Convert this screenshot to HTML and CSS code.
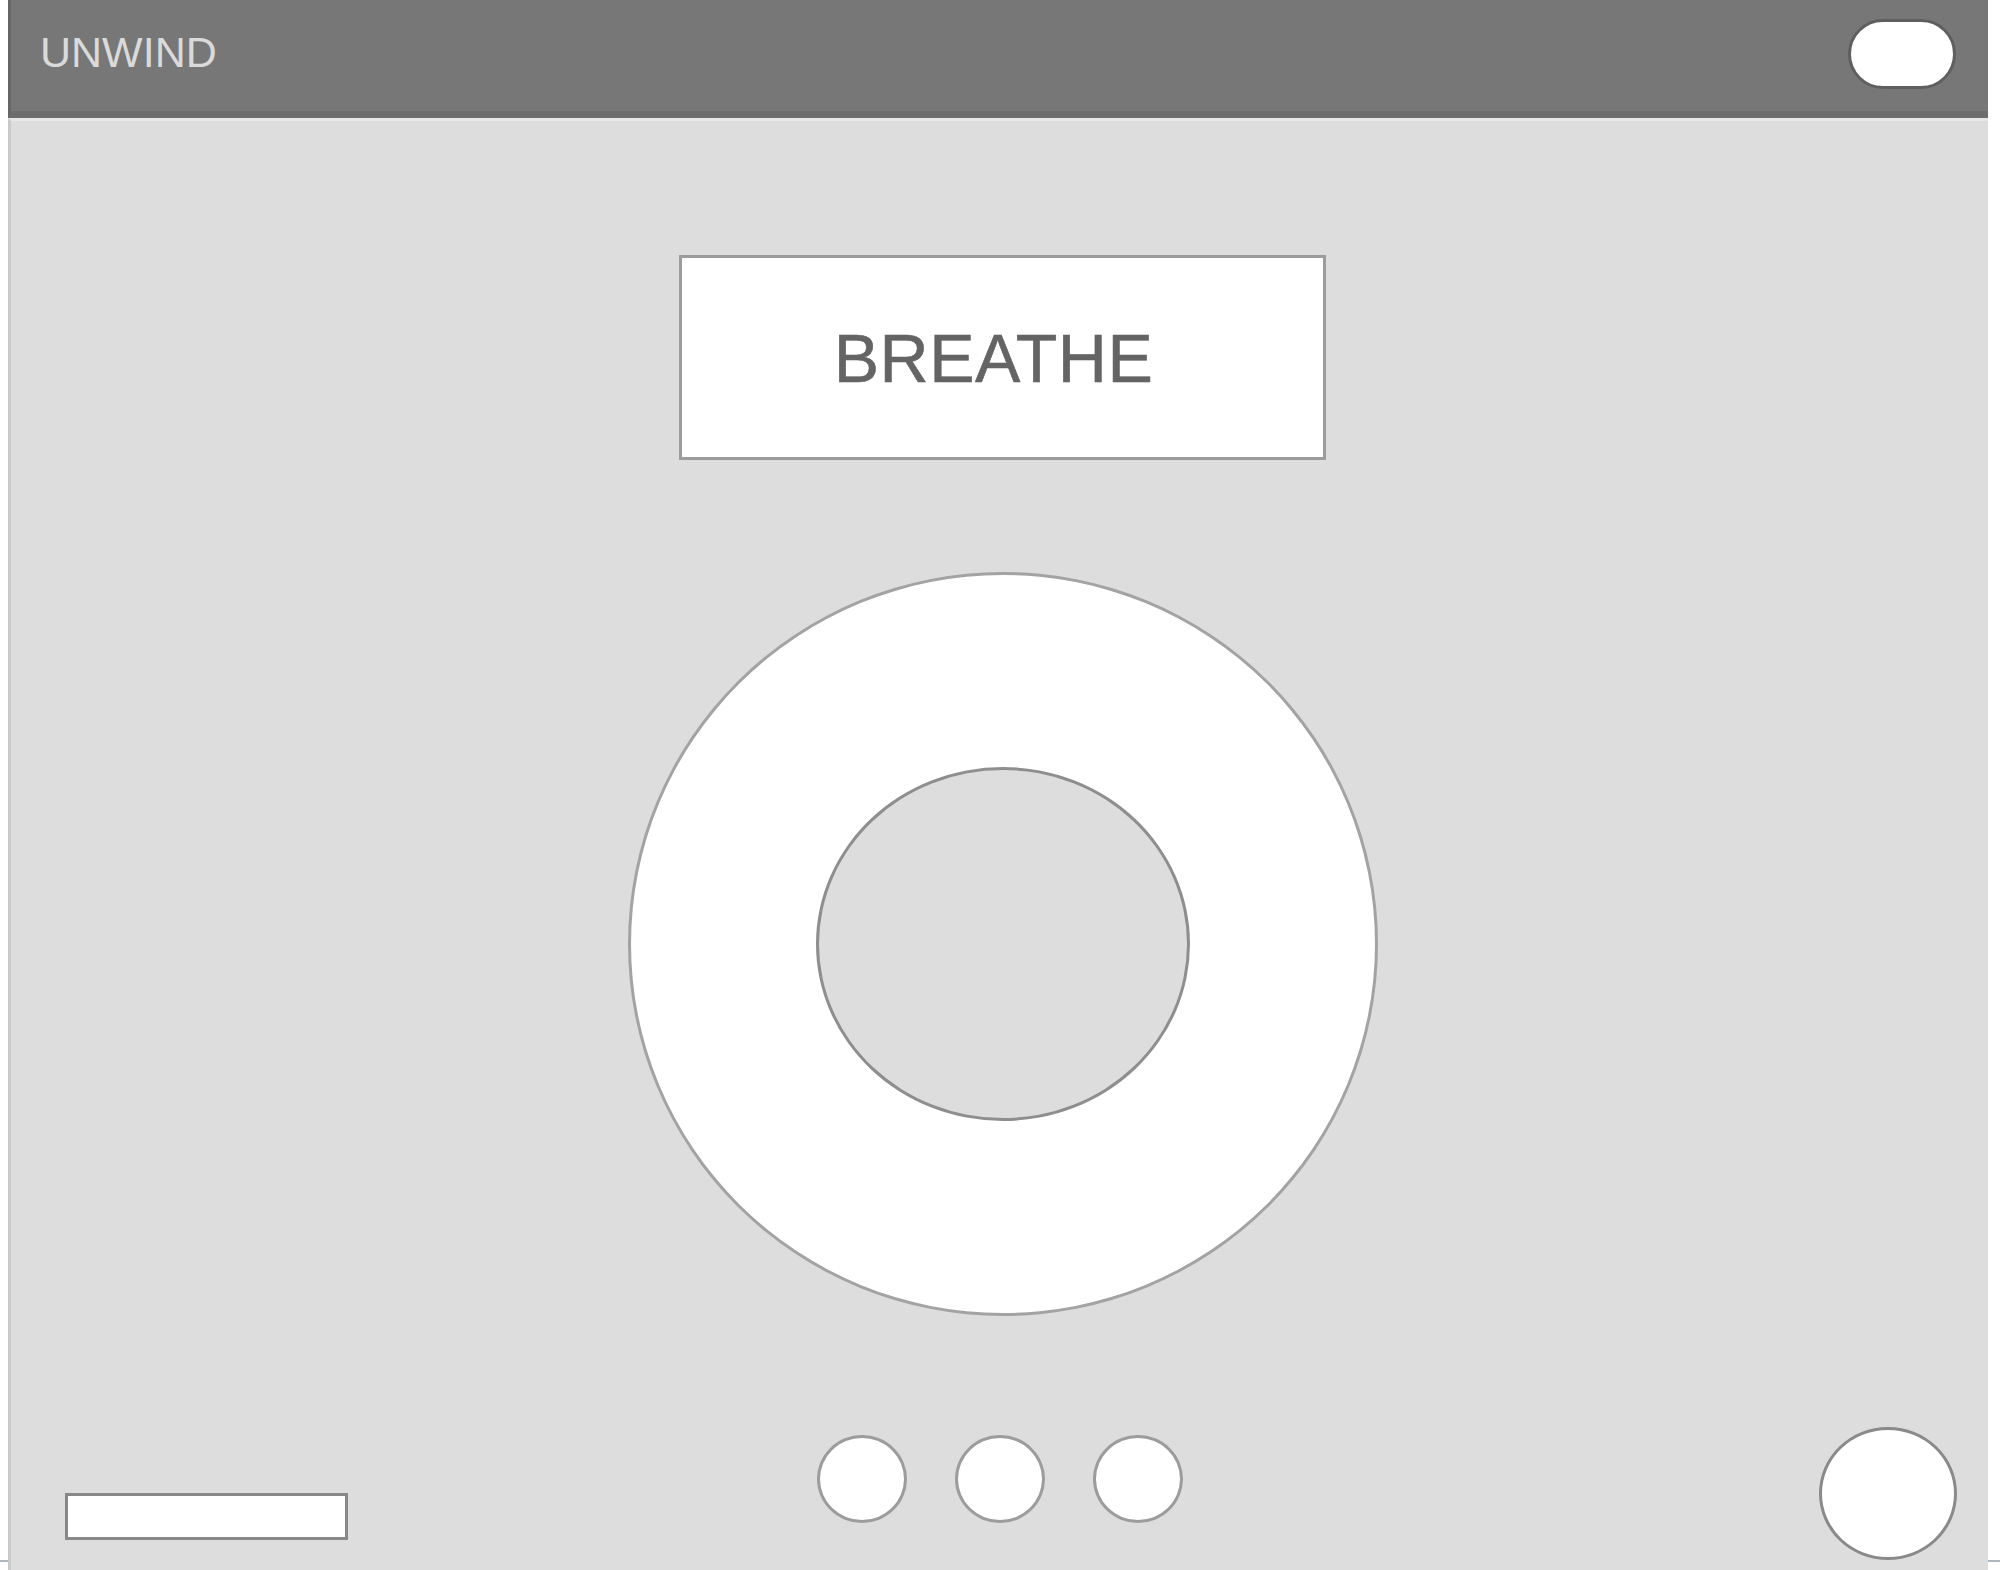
FILE: index.html
```html
<!DOCTYPE html>
<html lang="en">
<head>
<meta charset="utf-8">
<title>Unwind</title>
<link rel="stylesheet" href="styles.css">
</head>
<body>
<div class="frame">
  <header class="topbar">
    <div class="brand">UNWIND</div>
    <div class="toggle"></div>
  </header>
  <main class="stage">
    <div class="title-box">BREATHE</div>
    <div class="ring">
      <div class="ring-core"></div>
    </div>
    <div class="footer">
      <div class="bar"></div>
      <div class="dots">
        <span class="dot"></span>
        <span class="dot"></span>
        <span class="dot"></span>
      </div>
      <div class="round-btn"></div>
    </div>
  </main>
</div>
</body>
</html>
```
FILE: styles.css
```css
* { box-sizing: border-box; }
html, body { margin: 0; padding: 0; }
body {
  width: 2000px;
  height: 1570px;
  overflow: hidden;
  background: #ffffff linear-gradient(to bottom, transparent 1560px, #aeb5bd 1560px, #aeb5bd 1562px, transparent 1562px);
  font-family: "Liberation Sans", Arial, sans-serif;
}
.frame {
  margin-left: 8px;
  width: 1980px;
  height: 1570px;
  display: flex;
  flex-direction: column;
}
.topbar {
  height: 118px;
  flex: none;
  background: #777777;
  border-left: 3px solid #666666;
  border-bottom: 7px solid #6c6c6c;
  display: flex;
  align-items: center;
  justify-content: space-between;
  padding: 0 32px 0 29px;
}
.brand {
  color: #dadada;
  font-size: 43px;
  line-height: 1;
  margin-top: -6px;
}
.toggle {
  width: 108px;
  height: 70px;
  border-radius: 35px;
  background: #ffffff;
  border: 3px solid #5f5f5f;
  margin-top: -4px;
}
.stage {
  flex: 1;
  background: #dddddd;
  border-left: 3px solid #c9c9c9;
  border-top: 3px solid #e6e6e6;
  display: flex;
  flex-direction: column;
  align-items: center;
  padding-top: 134px;
}
.title-box {
  width: 647px;
  height: 205px;
  background: #ffffff;
  border: 3px solid #9c9c9c;
  display: flex;
  align-items: center;
  justify-content: center;
  padding-right: 18px;
  color: #646464;
  font-size: 68px;
  letter-spacing: 0.5px;
  margin-left: 6px;
  -webkit-text-stroke: 0.6px #646464;
}
.ring {
  margin-top: 112px;
  margin-left: 6px;
  width: 750px;
  height: 744px;
  border-radius: 50%;
  background: #ffffff;
  border: 3px solid #a3a3a3;
  display: flex;
  align-items: center;
  justify-content: center;
}
.ring-core {
  width: 374px;
  height: 354px;
  border-radius: 50%;
  background: #dddddd;
  border: 3px solid #8e8e8e;
}
.footer {
  margin-top: auto;
  width: 100%;
  display: grid;
  grid-template-columns: 1fr auto 1fr;
  align-items: end;
  padding-bottom: 10px;
}
.bar {
  justify-self: start;
  margin-left: 54px;
  margin-bottom: 20px;
  width: 283px;
  height: 47px;
  background: #ffffff;
  border: 3px solid #888888;
}
.dots {
  display: flex;
  gap: 48px;
  margin-bottom: 37px;
}
.dot {
  width: 90px;
  height: 88px;
  border-radius: 50%;
  background: #ffffff;
  border: 3px solid #9c9c9c;
}
.round-btn {
  justify-self: end;
  margin-right: 31px;
  width: 138px;
  height: 133px;
  border-radius: 50%;
  background: #ffffff;
  border: 3px solid #8a8a8a;
}
```
